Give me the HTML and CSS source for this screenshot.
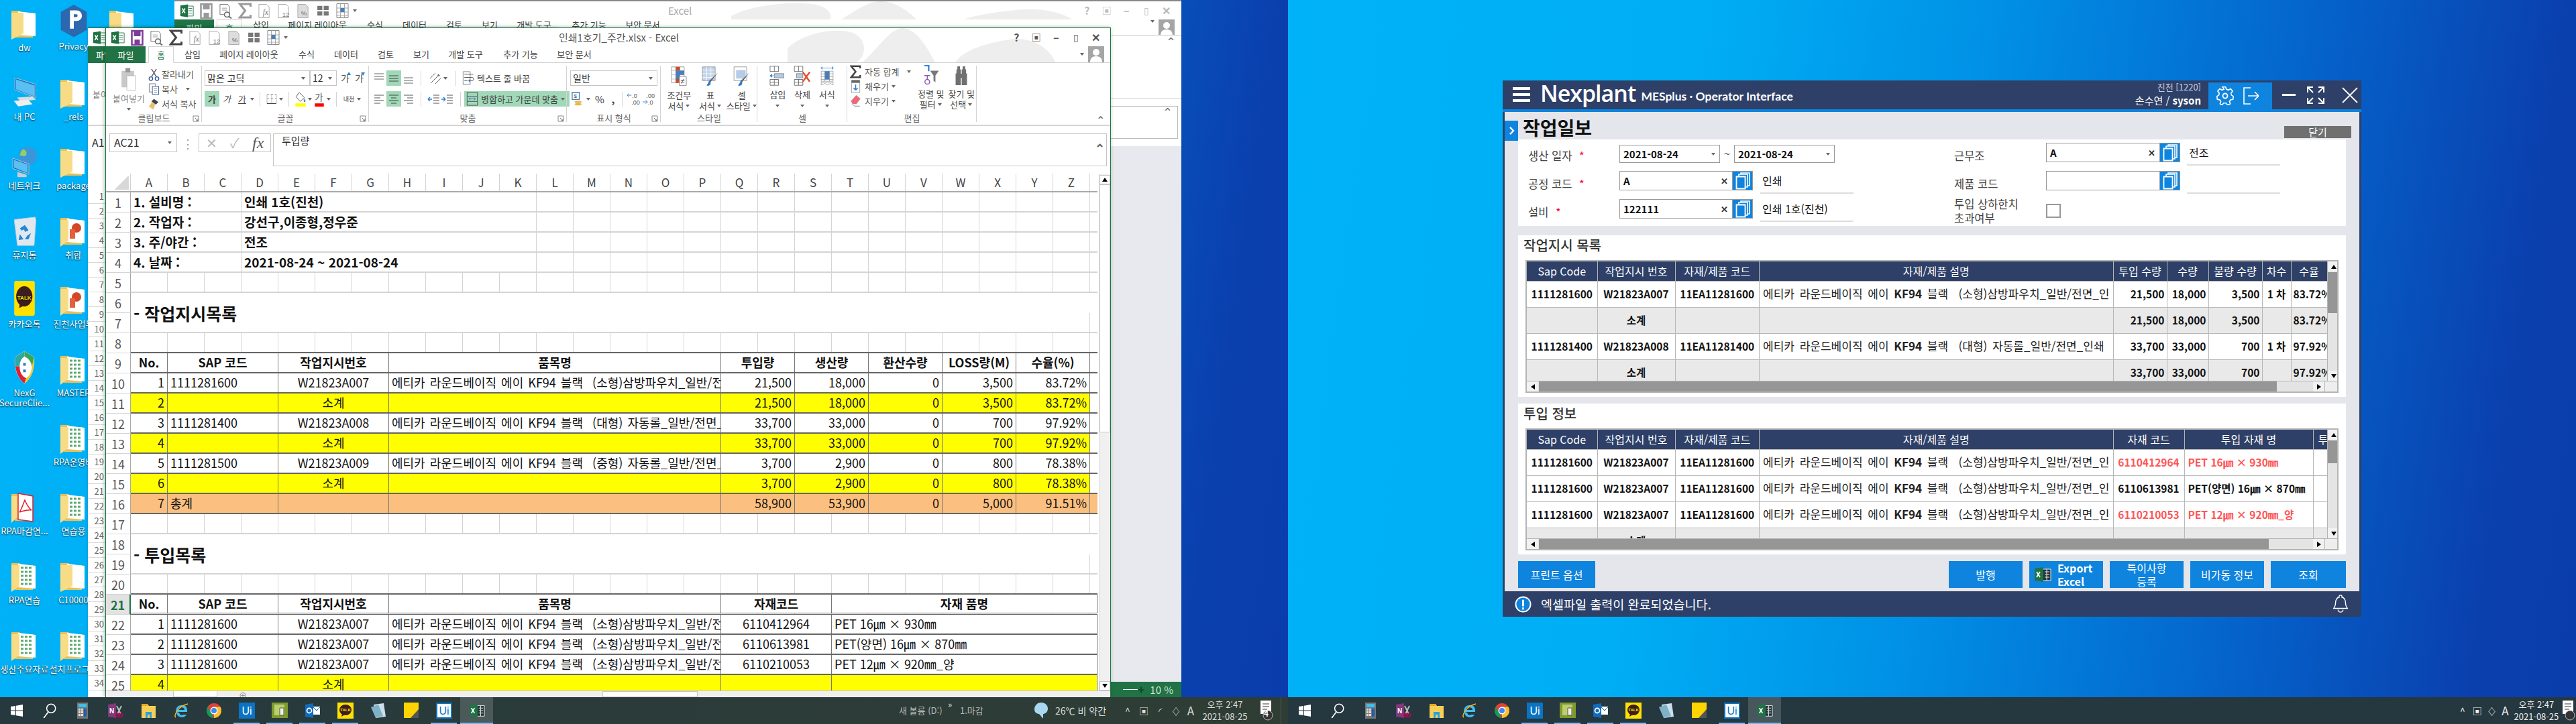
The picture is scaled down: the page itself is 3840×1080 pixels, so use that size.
FILE: index.html
```html
<!DOCTYPE html>
<html lang="ko">
<head>
<meta charset="utf-8">
<title>Desktop</title>
<link rel="stylesheet" href="styles.css">
</head>
<body>
<svg class="defs" aria-hidden="true">
<defs>
<symbol id="folder" viewBox="0 0 40 46"><path d="M0 3h12l3 3h17v37H6L0 38z" fill="#e9c15a"/><path d="M10 4l26 3v34l-26-2z" fill="#fff"/><path d="M0 6h18v31L0 46z" fill="#f8dc85" transform="translate(0 0)"/></symbol>
<symbol id="folderx" viewBox="0 0 40 46"><path d="M0 3h12l3 3h17v37H6L0 38z" fill="#e9c15a"/><path d="M10 4l26 3v34l-26-2z" fill="#fff"/><path d="M14 10h18M14 16h18M14 22h18M14 28h18M14 34h18" stroke="#5aa86f" stroke-width="3" stroke-dasharray="4 2"/><path d="M0 6h12v31L0 46z" fill="#f8dc85"/></symbol>
<symbol id="folderp" viewBox="0 0 40 46"><path d="M0 3h12l3 3h17v37H6L0 38z" fill="#e9c15a"/><path d="M10 4l26 3v34l-26-2z" fill="#fff"/><circle cx="24" cy="18" r="7" fill="#d24726"/><path d="M14 20h8v14h-8z" fill="#e2603a"/><path d="M0 6h12v31L0 46z" fill="#f8dc85"/></symbol>
<symbol id="xl" viewBox="0 0 24 24"><path d="M12 4h11v17H12z" fill="#fff" stroke="#207245"/><path d="M15 8h6M15 12h6M15 16h6" stroke="#207245"/><path d="M1 3l13-2v22L1 21z" fill="#207245"/><path d="M4 8l5 8M9 8l-5 8" stroke="#fff" stroke-width="1.8"/></symbol>
<symbol id="save" viewBox="0 0 20 24"><path d="M2 2h16v21H2z" fill="#fff" stroke="currentColor" stroke-width="2.5"/><path d="M5 2h10v8H5z" fill="currentColor"/><path d="M6 15h8v7H6z" fill="currentColor"/></symbol>
<symbol id="preview" viewBox="0 0 22 24"><path d="M2 2h12l3 4v12H2z" fill="#fff" stroke="#777"/><path d="M5 8h8M5 11h8" stroke="#999"/><circle cx="13" cy="18" r="4" fill="#fff" stroke="#666" stroke-width="1.6"/><path d="M16 21l4 3" stroke="#666" stroke-width="2"/></symbol>
<symbol id="sigma" viewBox="0 0 20 24"><path d="M18 6V2H2l8 10-8 10h16v-4" fill="none" stroke="currentColor" stroke-width="3"/></symbol>
<symbol id="fxd" viewBox="0 0 22 24"><path d="M2 2h12l4 4v17H2z" fill="#fff" stroke="#aaa"/><text x="8" y="18" font-size="12" font-style="italic" font-family="Liberation Serif" fill="#777">fx</text></symbol>
<symbol id="n12" viewBox="0 0 22 24"><path d="M2 2h12l4 4v17H2z" fill="#fff" stroke="#aaa"/><text x="8" y="21" font-size="10" font-family="Liberation Sans" fill="#777">12</text></symbol>
<symbol id="pct" viewBox="0 0 22 24"><path d="M2 2h12l4 4v17H2z" fill="#ddd" stroke="#aaa"/><text x="7" y="19" font-size="10" font-family="Liberation Sans" fill="#666">%</text></symbol>
<symbol id="quad" viewBox="0 0 20 20"><path d="M2 3h7v6H2zM11 3h7v6h-7zM2 11h7v6H2zM11 11h7v6h-7z" fill="#777"/></symbol>
<symbol id="gridb" viewBox="0 0 20 24"><path d="M1.500 1.500h17v21h-17z" fill="#fff" stroke="#888"/><path d="M1 8h18M1 14h18M1 19h18M7 2v20M13 2v20" stroke="#aaa"/><path d="M7 8h6v6H7z" fill="#4a7ebb"/></symbol>
<symbol id="caret" viewBox="0 0 8 6"><path d="M1 1h6L4 5z" fill="#666"/></symbol>
<symbol id="launch" viewBox="0 0 10 10"><path d="M1 1h8v8H1z" fill="none" stroke="#888"/><path d="M4 4l4 4M8 5v3H5" stroke="#777" fill="none"/></symbol>
<symbol id="paste" viewBox="0 0 34 50"><path d="M2 8h26v34H2z" fill="#c9c9c9"/><path d="M10 2h10v9H10z" fill="#999"/><path d="M13 18h18v30H13z" fill="#fff" stroke="#aaa"/></symbol>
<symbol id="cut" viewBox="0 0 18 22"><path d="M5 2l8 13M13 2L5 15" stroke="#555" stroke-width="1.400" fill="none"/><circle cx="4" cy="18" r="3" fill="none" stroke="#2b579a" stroke-width="1.400"/><circle cx="14" cy="18" r="3" fill="none" stroke="#2b579a" stroke-width="1.400"/></symbol>
<symbol id="copy" viewBox="0 0 18 20"><path d="M1.500 1.500h10v13h-10z" fill="#fff" stroke="#777"/><path d="M6.500 5.500h10v13h-10z" fill="#fff" stroke="#2b579a"/><path d="M9 9h5M9 12h5M9 15h5" stroke="#888"/></symbol>
<symbol id="brush" viewBox="0 0 18 20"><path d="M9 2l7 5-4 4-7-5z" fill="#444"/><path d="M6 7l5 4-3 8-7-5z" fill="#e7c26a"/></symbol>
<symbol id="lines-t" viewBox="0 0 20 20"><path d="M3 3h14M3 7h14M3 11h14" stroke="#666"/></symbol>
<symbol id="lines-m" viewBox="0 0 20 20"><path d="M3 6h14M3 10h14M3 14h14" stroke="#444"/></symbol>
<symbol id="lines-b" viewBox="0 0 20 20"><path d="M3 9h14M3 13h14M3 17h14" stroke="#666"/></symbol>
<symbol id="al" viewBox="0 0 20 20"><path d="M3 4h14M3 8h9M3 12h14M3 16h9" stroke="#555"/></symbol>
<symbol id="ac" viewBox="0 0 20 20"><path d="M3 4h14M6 8h8M3 12h14M6 16h8" stroke="#444"/></symbol>
<symbol id="ar" viewBox="0 0 20 20"><path d="M3 4h14M8 8h9M3 12h14M8 16h9" stroke="#555"/></symbol>
<symbol id="orient" viewBox="0 0 20 20"><path d="M3 17L15 5M2 10l8-8M10 18l8-8" stroke="#666" fill="none"/><path d="M14 3l3 3-4 1z" fill="#666"/></symbol>
<symbol id="wrap" viewBox="0 0 20 24"><path d="M2 2h11v20H2z" fill="#fff" stroke="#888"/><path d="M4 6h14M4 11h12a2 2 0 010 5h-4M4 16h5" stroke="#555" fill="none"/><path d="M13 13v6l-3-3z" fill="#2b7cd3"/></symbol>
<symbol id="merge" viewBox="0 0 20 24"><path d="M2 2h16v20H2zM2 8h16M2 16h16" fill="none" stroke="#555"/><path d="M5 12h10M5 12l2-2M5 12l2 2M15 12l-2-2M15 12l-2 2" stroke="#2b7cd3" fill="none"/></symbol>
<symbol id="indl" viewBox="0 0 20 20"><path d="M9 4h9M9 8h9M9 12h9M9 16h9" stroke="#555"/><path d="M7 10H1M1 10l3-3M1 10l3 3" stroke="#2b7cd3" fill="none" stroke-width="1.400"/></symbol>
<symbol id="indr" viewBox="0 0 20 20"><path d="M9 4h9M9 8h9M9 12h9M9 16h9" stroke="#555"/><path d="M1 10h6M7 10L4 7M7 10l-3 3" stroke="#2b7cd3" fill="none" stroke-width="1.400"/></symbol>
<symbol id="acct" viewBox="0 0 20 26"><path d="M2 2h12v12H2z" fill="#fff" stroke="#4a7ebb" stroke-width="1.500"/><text x="5" y="11" font-size="9" font-family="Liberation Sans" fill="#444">$</text><ellipse cx="12" cy="18" rx="6" ry="2" fill="#e7b84c"/><ellipse cx="12" cy="22" rx="6" ry="2" fill="#e7b84c"/></symbol>
<symbol id="dec1" viewBox="0 0 22 24"><text x="9" y="10" font-size="10" font-family="Liberation Sans" fill="#555">.0</text><text x="8" y="21" font-size="10" font-family="Liberation Sans" fill="#555">.00</text><path d="M8 6H1M1 6l3-3M1 6l3 3" stroke="#2b7cd3" fill="none"/></symbol>
<symbol id="dec2" viewBox="0 0 22 24"><text x="7" y="10" font-size="10" font-family="Liberation Sans" fill="#555">.00</text><text x="10" y="21" font-size="10" font-family="Liberation Sans" fill="#555">.0</text><path d="M1 17h8M9 17l-3-3M9 17l-3 3" stroke="#2b7cd3" fill="none"/></symbol>
<symbol id="border" viewBox="0 0 20 20"><path d="M3 3h14v14H3z" fill="none" stroke="#777" stroke-dasharray="1 1"/><path d="M3 10h14M10 3v14" stroke="#777" stroke-dasharray="1 1"/><path d="M3 17h14" stroke="#444"/></symbol>
<symbol id="fill" viewBox="0 0 20 24"><path d="M8 2l8 8-6 6-7-7z" fill="#fff" stroke="#555"/><path d="M15 11c2 3 3 4 3 5a2 2 0 01-3 0z" fill="#4a7ebb"/><path d="M2 19h16v5H2z" fill="#ffff00"/></symbol>
<symbol id="fcolor" viewBox="0 0 20 24"><text x="3" y="15" font-size="14" font-family="Noto Sans CJK KR" fill="#555">가</text><path d="M3 19h14v5H3z" fill="#ff0000"/></symbol>
<symbol id="cf" viewBox="0 0 30 38"><path d="M1 1h24v30H1z" fill="#fff" stroke="#888"/><path d="M1 8h24M1 16h24M1 24h24M9 1v30M17 1v30" stroke="#bbb"/><path d="M9 1h8v7H9zM9 24h8v7H9z" fill="#d24726"/><path d="M9 8h16v8H9zM9 16h8v8H9z" fill="#4a7ebb"/><path d="M16 19h13v17H16z" fill="#fff" stroke="#777"/><text x="18" y="33" font-size="14" font-family="Liberation Sans" fill="#444">≠</text></symbol>
<symbol id="tf" viewBox="0 0 32 38"><path d="M1 1h24v26H1z" fill="#c3d4ea" stroke="#888"/><path d="M1 7h24M1 14h24M1 21h24M9 1v26M17 1v26" stroke="#fff"/><path d="M30 12L16 30l-3-2z" fill="#666"/><path d="M13 28c4 0 4 3 3 6s-6 3-7 2 3-2 4-8z" fill="#2b7cd3"/></symbol>
<symbol id="cs" viewBox="0 0 32 38"><path d="M1 1h24v26H1z" fill="#fff" stroke="#888"/><path d="M5 7h18v16H5z" fill="#b5cbe6"/><path d="M30 12L16 30l-3-2z" fill="#666"/><path d="M13 28c4 0 4 3 3 6s-6 3-7 2 3-2 4-8z" fill="#2b7cd3"/></symbol>
<symbol id="cins" viewBox="0 0 30 38"><path d="M1 1h16v10H1zM9 1v10M1 26h16v11H1zM9 26v11M1 31h16" fill="#fff" stroke="#555"/><path d="M9 15h18v8H9z" fill="#b5cbe6" stroke="#777"/><path d="M8 19H1M1 19l3-3v6z" stroke="#2b7cd3" fill="#2b7cd3"/></symbol>
<symbol id="cdel" viewBox="0 0 32 38"><path d="M1 1h16v10H1zM9 1v10M1 26h16v11H1zM9 26v11M1 31h16" fill="#fff" stroke="#555"/><path d="M5 15h12v8H5z" fill="#b5cbe6" stroke="#777"/><path d="M17 12l13 18M30 12L17 30" stroke="#e0502d" stroke-width="3"/></symbol>
<symbol id="cfmt" viewBox="0 0 30 44"><path d="M1 5h28M1 5l3-3v6zM29 5l-3-3v6z" stroke="#2b7cd3" fill="none"/><path d="M2 12h26v22H2zM2 18h26M2 24h26M2 30h26M10 12v22M20 12v22" fill="#fff" stroke="#888"/><path d="M10 12h10v18H10z" fill="#4a7ebb"/><path d="M2 36h26v6l-6-3-6 3-6-3-8 3z" fill="none" stroke="#888"/></symbol>
<symbol id="fillb" viewBox="0 0 18 26"><path d="M1 1h16v24H1z" fill="#fff" stroke="#888"/><path d="M1 1h16v5H1z" fill="#666"/><path d="M9 9v11M9 20l-4-4M9 20l4-4" stroke="#2b7cd3" stroke-width="2" fill="none"/></symbol>
<symbol id="erase" viewBox="0 0 18 22"><path d="M10 1l7 6-7 9-6-1-3-4z" fill="#e86a7d"/><path d="M3 15l4 4h9" stroke="#777" fill="none"/></symbol>
<symbol id="sortf" viewBox="0 0 32 42"><path d="M2 1h9v12" stroke="#2b7cd3" stroke-width="3" fill="none"/><path d="M2 22h12M8 22v8" stroke="#8b5ab5" stroke-width="2" fill="none"/><circle cx="8" cy="35" r="5" fill="none" stroke="#8b5ab5" stroke-width="2"/><path d="M14 12h18l-7 10v14l-4-3V22z" fill="#777"/></symbol>
<symbol id="bino" viewBox="0 0 28 46"><path d="M5 3h6v7H5zM17 3h6v7h-6zM3 10h10v9H3zM15 10h10v9H15zM1 19h12v27H1zM15 19h12v27H15zM13 20h2v9h-2z" fill="#707070"/></symbol>
<symbol id="user" viewBox="0 0 24 24"><path d="M0 0h24v24H0z" fill="#a5a5a5"/><circle cx="12" cy="9" r="5" fill="#fff"/><path d="M3 24c0-7 4-9 9-9s9 2 9 9z" fill="#fff"/></symbol>
<symbol id="blobs" viewBox="0 0 430 52" preserveAspectRatio="none"><path d="M0 30C20 10 60 0 90 5s30 40 10 47H0zM110 52c20-15 40-50 60-52s40 30 50 52zM250 52c10-20 50-30 80-35 30-5 60 10 70 35z" fill="#eee"/></symbol>
<symbol id="pages" viewBox="0 0 22 26"><path d="M8 1h13v19H8z" fill="none" stroke="#fff" stroke-width="1.600"/><path d="M5 3h13v19H5z" fill="#0f84de" stroke="#fff" stroke-width="1.600"/><path d="M1.500 6.500h13v18h-13z" fill="#0f84de" stroke="#fff" stroke-width="1.800"/></symbol>
<symbol id="pc" viewBox="0 0 44 56"><path d="M4 0l38 12v24L4 22z" fill="#1d6fb5" stroke="#ccd"/><path d="M6 3l34 11v20L6 21z" fill="#58c0f2"/><path d="M8 36l28-2 6 6-28 3z" fill="#ddd"/><path d="M2 42l26-2 8 8-26 4z" fill="#eee"/></symbol>
<symbol id="net" viewBox="0 0 46 54"><circle cx="28" cy="16" r="16" fill="#3d95d9"/><path d="M20 4c6 2 8 8 4 12-4 2-6-2-10-1 2-6 3-9 6-11z" fill="#8fd06a"/><path d="M2 20l28 10v18L2 38z" fill="#1d6fb5" stroke="#ccd"/><path d="M4 23l24 8v15L4 36z" fill="#58c0f2"/><path d="M10 44l16 5v4H10z" fill="#ccc"/></symbol>
<symbol id="bin" viewBox="0 0 40 50"><path d="M3 6l34-4 1 6-3 40H8L3 8z" fill="#dfe8ee" stroke="#bcd"/><path d="M12 20l8-5 6 8-5 3-3-4-3 2zM12 30l6 8-8 1zM30 28l-4 10h-6l4-6z" fill="#2386d6"/></symbol>
<symbol id="talk" viewBox="0 0 53 90"><rect width="53" height="90" rx="5" fill="#ffe100"/><ellipse cx="26" cy="40" rx="21" ry="26" fill="#3c1e1e"/><path d="M14 60l-1 10 12-6z" fill="#3c1e1e"/><text x="26" y="48" text-anchor="middle" font-size="14" font-weight="700" font-family="Liberation Sans" fill="#fee500">TALK</text></symbol>
<symbol id="nexg" viewBox="0 0 50 80"><path d="M25 3l22 14c1 25-4 45-22 60C7 62 2 42 3 17z" fill="#fff" stroke="#ccc"/><path d="M25 3L3 17c0 8 0 14 1 20l10 2c-1-10 4-20 11-24z" fill="#2fa8a0"/><path d="M4 37c2 15 8 30 21 40l4-12C18 60 14 50 14 39z" fill="#e02030"/><path d="M47 17c1 25-4 45-22 60l4-12c10-6 12-16 13-26z" fill="#f7c712"/><path d="M25 3l22 14-5 22c0-10-8-20-17-24z" fill="#3aa655"/><path d="M22 30h6v6h-6zM22 45h6v6h-6z" fill="#2b79c2"/></symbol>
<symbol id="pdf" viewBox="0 0 40 46"><path d="M0 3h12l3 3h17v37H6L0 38z" fill="#e9c15a"/><path d="M10 2l22 4v38l-22-3z" fill="#fff" stroke="#e02030" stroke-width="1.500"/><path d="M20 12c-4 10-6 16-8 18 6-2 14-4 18-3-6-5-8-10-10-15z" fill="none" stroke="#e02030" stroke-width="1.500"/><path d="M0 6h9v31L0 46z" fill="#f8dc85"/></symbol>
<symbol id="privacy" viewBox="0 0 60 70"><path d="M30 0l27 15v38L30 68 3 53V15z" fill="#2c68ad"/><path d="M22 12h14a10 10 0 010 22h-6v16h-8zM30 20v6h5a3 3 0 000-6z" fill="#fff"/></symbol>
<symbol id="short" viewBox="0 0 14 14"><path d="M0 0h14v14H0z" fill="#fff"/><path d="M3 11c0-4 2-5 5-5V3l4 4-4 4V8c-2 0-3 1-5 3z" fill="#1f6fd0"/></symbol>
<symbol id="t-win" viewBox="0 0 20 20"><path d="M1 4l7-1v6.500H1zM9 2.800L19 1v8.500H9zM1 10.500h7V17l-7-1zM9 10.500h10V19L9 17.200z" fill="#fff"/></symbol>
<symbol id="t-search" viewBox="0 0 20 22"><circle cx="12" cy="8" r="6" fill="none" stroke="#fff" stroke-width="1.400"/><path d="M8 13l-6 8" stroke="#fff" stroke-width="1.600"/></symbol>
<symbol id="t-calc" viewBox="0 0 18 24"><rect x="1" y="0" width="16" height="24" fill="#777"/><path d="M3 2h12v5H3z" fill="#38c0ee"/><path d="M3 9h3v3H3zM7 9h3v3H7zM3 13h3v3H3zM7 13h3v3H7zM3 17h3v3H3zM7 17h3v3H7z" fill="#ddd"/><path d="M11 9h4v12h-4z" fill="#1f5fa8"/></symbol>
<symbol id="t-one" viewBox="0 0 24 24"><path d="M1 3l12-2v22L1 21z" fill="#80397b"/><text x="3" y="16" font-size="10" font-weight="700" font-family="Liberation Sans" fill="#fff">N</text><path d="M14 5l6 12M21 5l-6 12" stroke="#bbb" stroke-width="2"/><circle cx="15" cy="19" r="2.500" fill="none" stroke="#c05" stroke-width="1.500"/><circle cx="20" cy="19" r="2.500" fill="none" stroke="#c05" stroke-width="1.500"/></symbol>
<symbol id="t-exp" viewBox="0 0 24 24"><path d="M2 2h9l2 3h10v18H2z" fill="#f7cf56"/><path d="M2 2h9v3H2z" fill="#e3a822"/><path d="M8 14h9v9h-3v-5h-3v5H8z" fill="#2aa0dc"/></symbol>
<symbol id="t-ie" viewBox="0 0 24 24"><path d="M4 14h17c1-8-4-11-9-10-5 0-8 4-8 10zm3-3c0-3 3-4 5-4s5 1 5 4z" fill="#3fbdf1"/><path d="M5 14c0 6 5 8 8 8 4 0 6-2 7-4h-5c-2 2-5 1-6-3z" fill="#3fbdf1"/><path d="M4 22C0 20 8 5 22 2" fill="none" stroke="#f2b21e" stroke-width="1.500"/></symbol>
<symbol id="t-chrome" viewBox="0 0 24 24"><circle cx="12" cy="12" r="11" fill="#db4437"/><path d="M12 23a11 11 0 01-9.500-16.500L8 16z" fill="#0f9d58"/><path d="M12 23a11 11 0 009.500-16.500H12z" fill="#fbc02d"/><circle cx="12" cy="12" r="5.500" fill="#fff"/><circle cx="12" cy="12" r="4" fill="#4285f4"/></symbol>
<symbol id="t-ui" viewBox="0 0 24 24"><rect width="24" height="24" fill="#0a73c4"/><text x="12" y="18" text-anchor="middle" font-size="16" font-family="Liberation Sans" fill="#fff">Ui</text></symbol>
<symbol id="t-ui2" viewBox="0 0 24 24"><rect width="24" height="24" fill="#fff"/><rect x="1" y="1" width="22" height="22" fill="none" stroke="#0a73c4" stroke-width="2"/><text x="12" y="18" text-anchor="middle" font-size="16" font-family="Liberation Sans" fill="#0a73c4">Ui</text></symbol>
<symbol id="t-green" viewBox="0 0 24 24"><rect width="24" height="23" fill="#7f9a2c"/><path d="M4 3h15v16H4z" fill="#b9cf6f"/><path d="M12 8h6v11h-6z" fill="#eef3d8" stroke="#556"/></symbol>
<symbol id="t-out" viewBox="0 0 24 24"><path d="M1 3l12-2v22L1 21z" fill="#0f6cbd"/><circle cx="7" cy="12" r="3.500" fill="none" stroke="#fff" stroke-width="1.800"/><path d="M13 6h10v12H13z" fill="#fff"/><path d="M13 7l5 5 5-5" fill="none" stroke="#0f6cbd"/></symbol>
<symbol id="t-talk" viewBox="0 0 24 24"><rect width="24" height="24" fill="#ffe100"/><ellipse cx="12" cy="11" rx="9" ry="8" fill="#3c1e1e"/><path d="M7 17l-1 4 5-3z" fill="#3c1e1e"/><text x="12" y="13" text-anchor="middle" font-size="6" font-weight="700" font-family="Liberation Sans" fill="#fee500">TALK</text></symbol>
<symbol id="t-note" viewBox="0 0 24 24"><path d="M5 3l15-2 3 20-14 2z" fill="#cbe0ea"/><path d="M1 7l11-4 7 17-11 3z" fill="#7fb2c7"/></symbol>
<symbol id="t-sticky" viewBox="0 0 24 24"><path d="M1 0h22v23H1z" fill="#ffd400"/><path d="M23 10v13H11z" fill="#555"/></symbol>
<symbol id="t-xl" viewBox="0 0 26 24"><path d="M12 4h13v17H12z" fill="#28323a" stroke="#e8f0ea"/><path d="M16 8h7M16 12h7M16 16h7M19 4v17" stroke="#e8f0ea"/><path d="M1 3l13-2v22L1 21z" fill="#217346"/><path d="M4 8l5 8M9 8l-5 8" stroke="#fff" stroke-width="1.800"/></symbol>
<symbol id="t-note2" viewBox="0 0 20 30"><path d="M1 0h16v20H1z" fill="#fff"/><path d="M4 5h10M4 9h10M4 13h7" stroke="#333"/><circle cx="12" cy="22" r="7" fill="#333" stroke="#bbb"/></symbol>
<symbol id="gear" viewBox="0 0 24 24"><path d="M10 1h4l1 3 2.500 1 3-1.500 2.500 3-2 2.500.500 2.500L24 13l-.500 4-3 .500-1.500 2.200 1 3-3.500 1.500-2-2.500h-3l-2 2.500L7 22.700l1-3-1.500-2.200-3-.500L3 13l2.500-1.500L6 9 4 6.500l2.500-3 3 1.500L12 4z" fill="none" stroke="#fff" stroke-width="1.400" transform="translate(-1.500 -.5)"/><circle cx="12" cy="12" r="3" fill="none" stroke="#fff" stroke-width="1.600"/></symbol>
<symbol id="logout" viewBox="0 0 24 30"><path d="M12 3H2v24h10" fill="none" stroke="#fff" stroke-width="1.600"/><path d="M8 15h15M18 9l6 6-6 6" fill="none" stroke="#fff" stroke-width="1.600"/></symbol>
<symbol id="expand" viewBox="0 0 28 28"><path d="M2 10V2h8M2 2l8 8M18 2h8v8M26 2l-8 8M2 18v8h8M2 26l8-8M18 26h8v-8M26 26l-8-8" fill="none" stroke="#fff" stroke-width="2"/></symbol>
<symbol id="x" viewBox="0 0 24 24"><path d="M1 1l22 22M23 1L1 23" stroke="currentColor" stroke-width="1.800"/></symbol>
<symbol id="bell" viewBox="0 0 24 30"><path d="M12 1a2 2 0 012 3c5 1 6 5 6 10 0 5 2 6 3 8H1c1-2 3-3 3-8 0-5 1-9 6-10a2 2 0 012-3zM8 24a4 4 0 008 0" fill="none" stroke="#fff" stroke-width="1.500"/></symbol>
<symbol id="info" viewBox="0 0 26 26"><circle cx="13" cy="13" r="11.500" fill="#0f84de" stroke="#fff" stroke-width="2"/><path d="M11.500 6h3v10h-3zM11.500 18h3v3h-3z" fill="#fff"/></symbol>
<symbol id="chev" viewBox="0 0 10 14"><path d="M2 1l6 6-6 6" fill="none" stroke="#fff" stroke-width="2.600"/></symbol>
<symbol id="cloud" viewBox="0 0 22 26"><path d="M11 1c6 0 10 4 10 9 0 6-5 8-7 8v7l-6-7c-3 0-7-2-7-7s4-10 10-10z" fill="#a8d8f2"/></symbol>
<symbol id="tri-up" viewBox="0 0 10 10"><path d="M5 2l4 6H1z" fill="#000"/></symbol>
<symbol id="tri-dn" viewBox="0 0 10 10"><path d="M1 2h8L5 8z" fill="#000"/></symbol>
<symbol id="tri-l" viewBox="0 0 10 10"><path d="M8 1v8L2 5z" fill="#000"/></symbol>
<symbol id="tri-r" viewBox="0 0 10 10"><path d="M2 1v8l6-4z" fill="#000"/></symbol>
</defs>
</svg>

<main class="screen">
<section class="monitor">
  <div class="desk">
    <div class="icons">
      <div class="di"><svg class="g"><use href="#folder"/></svg><span>dw</span></div>
      <div class="di"><svg class="g"><use href="#pc"/></svg><span>내 PC</span></div>
      <div class="di"><svg class="g"><use href="#net"/></svg><span>네트워크</span></div>
      <div class="di"><svg class="g"><use href="#bin"/></svg><span>휴지통</span></div>
      <div class="di"><svg class="g g-talk"><use href="#talk"/></svg><span>카카오톡</span></div>
      <div class="di"><svg class="g g-talk"><use href="#nexg"/></svg><span>NexG<br>SecureClie...</span></div>
      <div class="di"></div>
      <div class="di"><svg class="g"><use href="#pdf"/></svg><span>RPA마감연...</span></div>
      <div class="di"><svg class="g"><use href="#folderx"/></svg><span>RPA연습</span></div>
      <div class="di"><svg class="g"><use href="#folderx"/></svg><span>생산주요자료</span></div>
      <div class="di"><svg class="g g-priv"><use href="#privacy"/></svg><span>Privacy</span></div>
      <div class="di"><svg class="g"><use href="#folder"/></svg><span>_rels</span></div>
      <div class="di"><svg class="g"><use href="#folder"/></svg><span>package</span></div>
      <div class="di"><svg class="g"><use href="#folderp"/></svg><span>취합</span></div>
      <div class="di"><svg class="g"><use href="#folderp"/></svg><span>진천사업부</span></div>
      <div class="di"><svg class="g"><use href="#folderx"/></svg><span>MASTER</span></div>
      <div class="di"><svg class="g"><use href="#folderx"/></svg><span>RPA운영비</span></div>
      <div class="di"><svg class="g"><use href="#folderx"/></svg><span>연습용</span></div>
      <div class="di"><svg class="g"><use href="#folder"/></svg><span>C10000</span></div>
      <div class="di"><svg class="g"><use href="#folderx"/></svg><span>설치프로그램</span></div>
      <div class="di"><svg class="g"><use href="#folder"/></svg></div>
      <div class="di rowfill"></div>
      <div class="di"><svg class="g"><use href="#folder"/></svg></div>
    </div>

    <div class="win win-back">
      <div class="tbar">
        <div class="qat qat-back">
          <svg class="q" viewBox="0 0 24 24"><use href="#xl"/></svg>
          <svg class="q gray"><use href="#save"/></svg>
          <svg class="q"><use href="#preview"/></svg>
          <svg class="q gray"><use href="#sigma"/></svg>
          <svg class="q"><use href="#fxd"/></svg>
          <svg class="q"><use href="#n12"/></svg>
          <svg class="q"><use href="#pct"/></svg>
          <svg class="q"><use href="#quad"/></svg>
          <svg class="q"><use href="#gridb"/></svg>
          <svg class="qc"><use href="#caret"/></svg>
        </div>
        <span class="wtitle back-t">Excel</span>
        <svg class="blobs blobs-b" preserveAspectRatio="none"><use href="#blobs"/></svg>
        <div class="wctl faint"><span>?</span><span class="c-box">▣</span><span>–</span><span class="c-box">▯</span><span>✕</span></div>
      </div>
      <div class="tabs tabs-back">
        <span class="tab-file">파일</span><span class="tab-home">홈</span>
        <span class="tb w1">삽입</span><span class="tb w2">페이지 레이아웃</span><span class="tb w3">수식</span><span class="tb w4">데이터</span><span class="tb w3">검토</span><span class="tb w5">보기</span><span class="tb w6">개발 도구</span><span class="tb w7">추가 기능</span><span class="tb w8">보안 문서</span>
        <svg class="qc push"><use href="#caret"/></svg><svg class="ava"><use href="#user"/></svg>
      </div>
      <div class="back-rib"><span class="upc">⌃</span></div>
      <div class="back-fx"><span class="upc">⌃</span></div>
      <div class="back-status"><i class="zoomline"></i><b>+</b><span>10 %</span></div>
    </div>

    <div class="win win-mid">
      <div class="mid-top"><svg class="q" viewBox="0 0 24 24"><use href="#xl"/></svg></div>
      <div class="mid-file">파일</div>
      <div class="mid-rib"><span>붙여넣기</span></div>
      <div class="mid-fx">A1</div>
      <div class="mid-corner"></div>
      <ol class="mid-rows"><li>1</li><li>2</li><li>3</li><li>4</li><li>5</li><li>6</li><li>7</li><li>8</li><li>9</li><li>10</li><li>11</li><li>12</li><li>13</li><li>14</li><li>15</li><li>16</li><li>17</li><li>18</li><li>19</li><li>20</li><li>21</li><li>22</li><li>23</li><li>24</li><li>25</li><li>26</li><li>27</li><li>28</li><li>29</li><li>30</li><li>31</li><li>32</li><li>33</li><li>34</li></ol>
    </div>

    <div class="win win-front">
      <div class="tbar">
        <div class="qat">
          <svg class="q" viewBox="0 0 24 24"><use href="#xl"/></svg>
          <svg class="q purple"><use href="#save"/></svg>
          <svg class="q"><use href="#preview"/></svg>
          <svg class="q dark"><use href="#sigma"/></svg>
          <svg class="q"><use href="#fxd"/></svg>
          <svg class="q"><use href="#n12"/></svg>
          <svg class="q"><use href="#pct"/></svg>
          <svg class="q"><use href="#quad"/></svg>
          <svg class="q"><use href="#gridb"/></svg>
          <svg class="qc"><use href="#caret"/></svg>
        </div>
        <span class="wtitle">인쇄1호기_주간.xlsx - Excel</span>
        <svg class="blobs blobs-f" preserveAspectRatio="none"><use href="#blobs"/></svg>
        <div class="wctl"><span>?</span><span class="c-box">▣</span><span>–</span><span class="c-box">▯</span><span>✕</span></div>
      </div>
      <div class="tabs">
        <span class="tab-file">파일</span><span class="tab-home">홈</span>
        <span class="tb w1">삽입</span><span class="tb w2">페이지 레이아웃</span><span class="tb w3">수식</span><span class="tb w4">데이터</span><span class="tb w3">검토</span><span class="tb w5">보기</span><span class="tb w6">개발 도구</span><span class="tb w7">추가 기능</span><span class="tb w8">보안 문서</span>
        <svg class="qc push"><use href="#caret"/></svg><svg class="ava"><use href="#user"/></svg>
      </div>

      <div class="ribbon">
        <div class="grp g-clip">
          <div class="grp-body clip">
            <div class="big-col b-paste"><svg class="i-paste"><use href="#paste"/></svg><span>붙여넣기</span><svg class="qc"><use href="#caret"/></svg></div>
            <div class="clip-list">
              <div><svg class="i16"><use href="#cut"/></svg>잘라내기</div>
              <div><svg class="i16"><use href="#copy"/></svg>복사<svg class="qc m-l"><use href="#caret"/></svg></div>
              <div><svg class="i16"><use href="#brush"/></svg>서식 복사</div>
            </div>
          </div>
          <div class="grp-label">클립보드<svg class="lau"><use href="#launch"/></svg></div>
        </div>
        <div class="grp g-font">
          <div class="grp-body rows">
            <div class="rr">
              <div class="combo c-font">맑은 고딕<svg class="qc push"><use href="#caret"/></svg></div>
              <div class="combo c-size">12<svg class="qc push"><use href="#caret"/></svg></div>
              <span class="ga gap-g">가<sup>▲</sup></span><span class="ga">가<sup>▼</sup></span>
            </div>
            <div class="rr">
              <span class="btn on bb">가</span><span class="btn ii">가</span><span class="btn uu">가</span><svg class="qc"><use href="#caret"/></svg><i class="sep"></i>
              <svg class="i20"><use href="#border"/></svg><svg class="qc"><use href="#caret"/></svg><i class="sep"></i>
              <svg class="i20"><use href="#fill"/></svg><svg class="qc"><use href="#caret"/></svg>
              <svg class="i20"><use href="#fcolor"/></svg><svg class="qc"><use href="#caret"/></svg><i class="sep"></i>
              <span class="tiny">내천</span><svg class="qc"><use href="#caret"/></svg>
            </div>
          </div>
          <div class="grp-label">글꼴<svg class="lau"><use href="#launch"/></svg></div>
        </div>
        <div class="grp g-align">
          <div class="grp-body rows">
            <div class="rr">
              <span class="btn"><svg class="i20"><use href="#lines-t"/></svg></span><span class="btn on"><svg class="i20"><use href="#lines-m"/></svg></span><span class="btn"><svg class="i20"><use href="#lines-b"/></svg></span><i class="sep"></i>
              <span class="btn w-or"><svg class="i20"><use href="#orient"/></svg><svg class="qc"><use href="#caret"/></svg></span><i class="sep"></i>
              <span class="txt-btn"><svg class="i20"><use href="#wrap"/></svg>텍스트 줄 바꿈</span>
            </div>
            <div class="rr">
              <span class="btn"><svg class="i20"><use href="#al"/></svg></span><span class="btn on"><svg class="i20"><use href="#ac"/></svg></span><span class="btn"><svg class="i20"><use href="#ar"/></svg></span><i class="sep"></i>
              <span class="btn w-ind"><svg class="i20"><use href="#indl"/></svg><svg class="i20"><use href="#indr"/></svg></span><i class="sep"></i>
              <span class="txt-btn merge"><svg class="i20"><use href="#merge"/></svg>병합하고 가운데 맞춤<svg class="qc"><use href="#caret"/></svg></span>
            </div>
          </div>
          <div class="grp-label">맞춤<svg class="lau"><use href="#launch"/></svg></div>
        </div>
        <div class="grp g-num">
          <div class="grp-body rows rows-n">
            <div class="rr"><div class="combo c-num">일반<svg class="qc push"><use href="#caret"/></svg></div></div>
            <div class="rr rr-n">
              <svg class="i20"><use href="#acct"/></svg><svg class="qc"><use href="#caret"/></svg><span class="pc">%</span><span class="pc comma">,</span><i class="sep"></i><svg class="i20"><use href="#dec1"/></svg><svg class="i20"><use href="#dec2"/></svg>
            </div>
          </div>
          <div class="grp-label">표시 형식<svg class="lau"><use href="#launch"/></svg></div>
        </div>
        <div class="grp g-style">
          <div class="grp-body bigs">
            <div class="big"><svg class="i-big"><use href="#cf"/></svg><span>조건부</span><span>서식<svg class="qc"><use href="#caret"/></svg></span></div>
            <div class="big"><svg class="i-big"><use href="#tf"/></svg><span>표</span><span>서식<svg class="qc"><use href="#caret"/></svg></span></div>
            <div class="big"><svg class="i-big"><use href="#cs"/></svg><span>셀</span><span>스타일<svg class="qc"><use href="#caret"/></svg></span></div>
          </div>
          <div class="grp-label">스타일</div>
        </div>
        <div class="grp g-cell">
          <div class="grp-body bigs">
            <div class="big"><svg class="i-big"><use href="#cins"/></svg><span>삽입</span><svg class="qc"><use href="#caret"/></svg></div>
            <div class="big"><svg class="i-big"><use href="#cdel"/></svg><span>삭제</span><svg class="qc"><use href="#caret"/></svg></div>
            <div class="big"><svg class="i-big"><use href="#cfmt"/></svg><span>서식</span><svg class="qc"><use href="#caret"/></svg></div>
          </div>
          <div class="grp-label">셀</div>
        </div>
        <div class="grp g-edit">
          <div class="grp-body edit">
            <div class="clip-list edit-list">
              <div><svg class="i16 dark"><use href="#sigma"/></svg>자동 합계<svg class="qc m-l"><use href="#caret"/></svg></div>
              <div><svg class="i16"><use href="#fillb"/></svg>채우기<svg class="qc"><use href="#caret"/></svg></div>
              <div><svg class="i16"><use href="#erase"/></svg>지우기<svg class="qc"><use href="#caret"/></svg></div>
            </div>
            <div class="big"><svg class="i-big"><use href="#sortf"/></svg><span>정렬 및</span><span>필터<svg class="qc"><use href="#caret"/></svg></span></div>
            <div class="big"><svg class="i-big"><use href="#bino"/></svg><span>찾기 및</span><span>선택<svg class="qc"><use href="#caret"/></svg></span></div>
          </div>
          <div class="grp-label">편집</div>
        </div>
        <span class="rib-up">⌃</span>
      </div>

      <div class="fxbar">
        <div class="namebox">AC21<svg class="qc push"><use href="#caret"/></svg></div>
        <span class="dots">⋮</span>
        <div class="fxbtns"><span class="fx-x">✕</span><span class="fx-c">✓</span><span class="fx-f">fx</span></div>
        <div class="fxinput">투입량<span class="fx-up">⌃</span></div>
      </div>

      <div class="sheet-wrap">
        <div class="sheet">
          <div class="colhead"><div class="corner"></div><div class="heads"><span>A</span><span>B</span><span>C</span><span>D</span><span>E</span><span>F</span><span>G</span><span>H</span><span>I</span><span>J</span><span>K</span><span>L</span><span>M</span><span>N</span><span>O</span><span>P</span><span>Q</span><span>R</span><span>S</span><span>T</span><span>U</span><span>V</span><span>W</span><span>X</span><span>Y</span><span>Z</span></div></div>

          <div class="xrow"><div class="rh">1</div><div class="cells"><div class="c s3 b info">1. 설비명 :</div><div class="c s8 b info">인쇄 1호(진천)</div></div></div>
          <div class="xrow"><div class="rh">2</div><div class="cells"><div class="c s3 b info">2. 작업자 :</div><div class="c s8 b info">강선구,이종형,정우준</div></div></div>
          <div class="xrow"><div class="rh">3</div><div class="cells"><div class="c s3 b info">3. 주/야간 :</div><div class="c s8 b info">전조</div></div></div>
          <div class="xrow"><div class="rh">4</div><div class="cells"><div class="c s3 b info">4. 날짜 :</div><div class="c s8 b info">2021-08-24 ~ 2021-08-24</div></div></div>
          <div class="xrow"><div class="rh">5</div><div class="cells"></div></div>
          <div class="xrow"><div class="rh">6</div><div class="cells nob"><div class="c s26 sect"><span>- 작업지시목록</span></div></div></div>
          <div class="xrow"><div class="rh">7</div><div class="cells"><div class="c s26"></div></div></div>
          <div class="xrow"><div class="rh">8</div><div class="cells hb"></div></div>

          <div class="xrow"><div class="rh">9</div><div class="cells t hb"><div class="c s1 m b">No.</div><div class="c s3 m b">SAP 코드</div><div class="c s3 m b">작업지시번호</div><div class="c s9 m b">품목명</div><div class="c s2 m b">투입량</div><div class="c s2 m b">생산량</div><div class="c s2 m b">환산수량</div><div class="c s2 m b">LOSS량(M)</div><div class="c s2 m b">수율(%)</div></div></div>
          <div class="xrow"><div class="rh">10</div><div class="cells t hb"><div class="c s1 r">1</div><div class="c s3">1111281600</div><div class="c s3 m">W21823A007</div><div class="c s9 pn">에티카 라운드베이직 에이 KF94 블랙&nbsp; (소형)삼방파우치_일반/전면_인쇄</div><div class="c s2 r">21,500</div><div class="c s2 r">18,000</div><div class="c s2 r">0</div><div class="c s2 r">3,500</div><div class="c s2 r">83.72%</div></div></div>
          <div class="xrow"><div class="rh">11</div><div class="cells t hb y"><div class="c s1 r">2</div><div class="c s3"></div><div class="c s3 m">소계</div><div class="c s9"></div><div class="c s2 r">21,500</div><div class="c s2 r">18,000</div><div class="c s2 r">0</div><div class="c s2 r">3,500</div><div class="c s2 r">83.72%</div></div></div>
          <div class="xrow"><div class="rh">12</div><div class="cells t hb"><div class="c s1 r">3</div><div class="c s3">1111281400</div><div class="c s3 m">W21823A008</div><div class="c s9 pn">에티카 라운드베이직 에이 KF94 블랙&nbsp; (대형) 자동롤_일반/전면_인쇄</div><div class="c s2 r">33,700</div><div class="c s2 r">33,000</div><div class="c s2 r">0</div><div class="c s2 r">700</div><div class="c s2 r">97.92%</div></div></div>
          <div class="xrow"><div class="rh">13</div><div class="cells t hb y"><div class="c s1 r">4</div><div class="c s3"></div><div class="c s3 m">소계</div><div class="c s9"></div><div class="c s2 r">33,700</div><div class="c s2 r">33,000</div><div class="c s2 r">0</div><div class="c s2 r">700</div><div class="c s2 r">97.92%</div></div></div>
          <div class="xrow"><div class="rh">14</div><div class="cells t hb"><div class="c s1 r">5</div><div class="c s3">1111281500</div><div class="c s3 m">W21823A009</div><div class="c s9 pn">에티카 라운드베이직 에이 KF94 블랙&nbsp; (중형) 자동롤_일반/전면_인쇄</div><div class="c s2 r">3,700</div><div class="c s2 r">2,900</div><div class="c s2 r">0</div><div class="c s2 r">800</div><div class="c s2 r">78.38%</div></div></div>
          <div class="xrow"><div class="rh">15</div><div class="cells t hb y"><div class="c s1 r">6</div><div class="c s3"></div><div class="c s3 m">소계</div><div class="c s9"></div><div class="c s2 r">3,700</div><div class="c s2 r">2,900</div><div class="c s2 r">0</div><div class="c s2 r">800</div><div class="c s2 r">78.38%</div></div></div>
          <div class="xrow"><div class="rh">16</div><div class="cells t hb o"><div class="c s1 r">7</div><div class="c s3">총계</div><div class="c s3"></div><div class="c s9"></div><div class="c s2 r">58,900</div><div class="c s2 r">53,900</div><div class="c s2 r">0</div><div class="c s2 r">5,000</div><div class="c s2 r">91.51%</div><div class="c sl"></div></div></div>
          <div class="xrow"><div class="rh">17</div><div class="cells"></div></div>
          <div class="xrow"><div class="rh">18</div><div class="cells nob"><div class="c s26 sect"><span>- 투입목록</span></div></div></div>
          <div class="xrow"><div class="rh">19</div><div class="cells"><div class="c s26"></div></div></div>
          <div class="xrow"><div class="rh">20</div><div class="cells hb"></div></div>

          <div class="xrow"><div class="rh act">21</div><div class="cells t dbl"><div class="c s1 m b">No.</div><div class="c s3 m b">SAP 코드</div><div class="c s3 m b">작업지시번호</div><div class="c s9 m b">품목명</div><div class="c s3 m b">자재코드</div><div class="c s8 m b">자재 품명</div></div></div>
          <div class="xrow"><div class="rh">22</div><div class="cells t hb"><div class="c s1 r">1</div><div class="c s3">1111281600</div><div class="c s3 m">W21823A007</div><div class="c s9 pn">에티카 라운드베이직 에이 KF94 블랙&nbsp; (소형)삼방파우치_일반/전면_인쇄</div><div class="c s3 m">6110412964</div><div class="c s8">PET 16㎛ × 930㎜</div></div></div>
          <div class="xrow"><div class="rh">23</div><div class="cells t hb"><div class="c s1 r">2</div><div class="c s3">1111281600</div><div class="c s3 m">W21823A007</div><div class="c s9 pn">에티카 라운드베이직 에이 KF94 블랙&nbsp; (소형)삼방파우치_일반/전면_인쇄</div><div class="c s3 m">6110613981</div><div class="c s8">PET(양면) 16㎛ × 870㎜</div></div></div>
          <div class="xrow"><div class="rh">24</div><div class="cells t hb"><div class="c s1 r">3</div><div class="c s3">1111281600</div><div class="c s3 m">W21823A007</div><div class="c s9 pn">에티카 라운드베이직 에이 KF94 블랙&nbsp; (소형)삼방파우치_일반/전면_인쇄</div><div class="c s3 m">6110210053</div><div class="c s8">PET 12㎛ × 920㎜_양</div></div></div>
          <div class="xrow"><div class="rh">25</div><div class="cells t hb y"><div class="c s1 r">4</div><div class="c s3"></div><div class="c s3 m">소계</div><div class="c s9"></div><div class="c s3"></div><div class="c s8"></div></div></div>
        </div>
        <div class="vs"><span class="vs-b"><svg class="tri"><use href="#tri-up"/></svg></span><span class="vs-t"></span><span class="vs-f"></span><span class="vs-b"><svg class="tri"><use href="#tri-dn"/></svg></span></div>
      </div>
      <div class="sheetbar"><span class="sh-tab">Sheet1</span><span class="sh-plus">⊕</span><span class="sh-thumb"></span></div>
    </div>
  </div>
  <footer class="taskbar tb-l">
    <span class="ti"><svg class="ti-i s20"><use href="#t-win"/></svg></span>
    <span class="ti"><svg class="ti-i"><use href="#t-search"/></svg></span>
    <span class="ti"><svg class="ti-i"><use href="#t-calc"/></svg></span>
    <span class="ti"><svg class="ti-i"><use href="#t-one"/></svg></span>
    <span class="ti"><svg class="ti-i"><use href="#t-exp"/></svg></span>
    <span class="ti"><svg class="ti-i"><use href="#t-ie"/></svg></span>
    <span class="ti"><svg class="ti-i"><use href="#t-chrome"/></svg></span>
    <span class="ti run"><svg class="ti-i"><use href="#t-ui"/></svg></span>
    <span class="ti run"><svg class="ti-i"><use href="#t-green"/></svg></span>
    <span class="ti run"><svg class="ti-i"><use href="#t-out"/></svg></span>
    <span class="ti run"><svg class="ti-i"><use href="#t-talk"/></svg></span>
    <span class="ti"><svg class="ti-i"><use href="#t-note"/></svg></span>
    <span class="ti"><svg class="ti-i"><use href="#t-sticky"/></svg></span>
    <span class="ti run"><svg class="ti-i"><use href="#t-ui2"/></svg></span>
    <span class="ti run act"><svg class="ti-i"><use href="#t-xl"/></svg></span>
    <div class="tray">
      <span class="tool1">새 볼륨 (D:)</span><span class="tchev">»</span><span class="tool2">1.마감</span>
      <svg class="w-ic"><use href="#cloud"/></svg><span class="w-tx">26℃ 비 약간</span>
      <span class="sys">^</span><span class="sys">▣</span><span class="sys">◜</span><span class="sys">♢</span><span class="sys-a">A</span>
      <div class="clock"><span>오후 2:47</span><span>2021-08-25</span></div>
      <span class="notif"><svg class="n-ic"><use href="#t-note2"/></svg><b>4</b></span>
      <i class="showd"></i>
    </div>
  </footer>
</section>

<section class="monitor">
  <div class="desk">
    <div class="mes">
      <header class="mes-h">
        <div class="burger"><i></i><i></i><i></i></div>
        <span class="logo">Nexplant</span>
        <span class="logo-sub">MESplus · Operator Interface</span>
        <div class="who"><span class="site">진천 [1220]</span><span class="usr">손수연 / <b>syson</b></span></div>
        <div class="h-blue"><svg class="h-gear"><use href="#gear"/></svg><svg class="h-out"><use href="#logout"/></svg></div>
        <div class="h-ctl"><i class="h-min"></i><svg class="h-exp"><use href="#expand"/></svg><svg class="h-x"><use href="#x"/></svg></div>
      </header>
      <div class="mes-b">
        <span class="side"><svg class="side-i"><use href="#chev"/></svg></span>
        <div class="page-t"><h1>작업일보</h1><span class="close">닫기</span></div>
        <div class="form">
          <div class="fcol">
            <div class="frow"><label class="fl">생산 일자 <em>*</em></label><div class="date">2021-08-24<svg class="qc2 push"><use href="#caret"/></svg></div><span class="tilde">~</span><div class="date">2021-08-24<svg class="qc2 push"><use href="#caret"/></svg></div></div>
            <div class="frow"><label class="fl">공정 코드 <em>*</em></label><div class="look"><span class="lv">A</span><span class="lx">✕</span><span class="lb"><svg class="lb-i"><use href="#pages"/></svg></span></div><div class="val">인쇄</div></div>
            <div class="frow"><label class="fl">설비 <em>*</em></label><div class="look"><span class="lv">122111</span><span class="lx">✕</span><span class="lb"><svg class="lb-i"><use href="#pages"/></svg></span></div><div class="val">인쇄 1호(진천)</div></div>
          </div>
          <div class="fcol fcol-r">
            <div class="frow"><label class="fl">근무조</label><div class="look"><span class="lv">A</span><span class="lx">✕</span><span class="lb"><svg class="lb-i"><use href="#pages"/></svg></span></div><div class="val">전조</div></div>
            <div class="frow"><label class="fl">제품 코드</label><div class="look"><span class="lv"></span><span class="lb"><svg class="lb-i"><use href="#pages"/></svg></span></div><div class="val"></div></div>
            <div class="frow"><label class="fl fl2">투입 상하한치<br>초과여부</label><span class="chk"></span></div>
          </div>
        </div>

        <section class="panel p1">
          <h2>작업지시 목록</h2>
          <div class="gridbox">
            <div class="gridtop">
              <div class="gv">
                <table class="tbl tbl1">
                  <colgroup><col class="k1"><col class="k2"><col class="k3"><col class="k4"><col class="k5"><col class="k6"><col class="k7"><col class="k8"><col class="k9"></colgroup>
                  <thead><tr><th>Sap Code</th><th>작업지시 번호</th><th>자재/제품 코드</th><th>자재/제품 설명</th><th>투입 수량</th><th>수량</th><th>불량 수량</th><th>차수</th><th>수율</th></tr></thead>
                  <tbody>
                    <tr><td class="n">1111281600</td><td class="n">W21823A007</td><td class="n">11EA11281600</td><td class="d">에티카 라운드베이직 에이 <b>KF94</b> 블랙&nbsp; (소형)삼방파우치_일반/전면_인</td><td class="n r">21,500</td><td class="n r">18,000</td><td class="n r">3,500</td><td class="n">1 차</td><td class="n">83.72%</td></tr>
                    <tr class="sub"><td></td><td class="n">소계</td><td></td><td></td><td class="n r">21,500</td><td class="n r">18,000</td><td class="n r">3,500</td><td></td><td class="n">83.72%</td></tr>
                    <tr><td class="n">1111281400</td><td class="n">W21823A008</td><td class="n">11EA11281400</td><td class="d">에티카 라운드베이직 에이 <b>KF94</b> 블랙&nbsp; (대형) 자동롤_일반/전면_인쇄</td><td class="n r">33,700</td><td class="n r">33,000</td><td class="n r">700</td><td class="n">1 차</td><td class="n">97.92%</td></tr>
                    <tr class="sub"><td></td><td class="n">소계</td><td></td><td></td><td class="n r">33,700</td><td class="n r">33,000</td><td class="n r">700</td><td></td><td class="n">97.92%</td></tr>
                  </tbody>
                </table>
              </div>
              <div class="gvs"><span class="gb"><svg class="tri"><use href="#tri-up"/></svg></span><span class="gth th1"></span><span class="gfl"></span><span class="gb"><svg class="tri"><use href="#tri-dn"/></svg></span></div>
            </div>
            <div class="ghs"><span class="gb"><svg class="tri"><use href="#tri-l"/></svg></span><span class="gth h1"></span><span class="gfl"></span><span class="gb"><svg class="tri"><use href="#tri-r"/></svg></span><span class="gcor"></span></div>
          </div>
        </section>

        <section class="panel p2">
          <h2>투입 정보</h2>
          <div class="gridbox">
            <div class="gridtop">
              <div class="gv">
                <table class="tbl tbl2">
                  <colgroup><col class="k1"><col class="k2"><col class="k3"><col class="k4"><col class="k10"><col class="k11"><col class="k12"></colgroup>
                  <thead><tr><th>Sap Code</th><th>작업지시 번호</th><th>자재/제품 코드</th><th>자재/제품 설명</th><th>자재 코드</th><th>투입 자재 명</th><th class="clipth">투입</th></tr></thead>
                  <tbody>
                    <tr><td class="n">1111281600</td><td class="n">W21823A007</td><td class="n">11EA11281600</td><td class="d">에티카 라운드베이직 에이 <b>KF94</b> 블랙&nbsp; (소형)삼방파우치_일반/전면_인</td><td class="n red">6110412964</td><td class="n red la">PET 16㎛ × 930㎜</td><td></td></tr>
                    <tr><td class="n">1111281600</td><td class="n">W21823A007</td><td class="n">11EA11281600</td><td class="d">에티카 라운드베이직 에이 <b>KF94</b> 블랙&nbsp; (소형)삼방파우치_일반/전면_인</td><td class="n">6110613981</td><td class="n la">PET(양면) 16㎛ × 870㎜</td><td></td></tr>
                    <tr><td class="n">1111281600</td><td class="n">W21823A007</td><td class="n">11EA11281600</td><td class="d">에티카 라운드베이직 에이 <b>KF94</b> 블랙&nbsp; (소형)삼방파우치_일반/전면_인</td><td class="n red">6110210053</td><td class="n red la">PET 12㎛ × 920㎜_양</td><td></td></tr>
                    <tr class="sub"><td></td><td class="n">소계</td><td></td><td></td><td></td><td></td><td></td></tr>
                  </tbody>
                </table>
              </div>
              <div class="gvs"><span class="gb"><svg class="tri"><use href="#tri-up"/></svg></span><span class="gth th2"></span><span class="gfl"></span><span class="gb"><svg class="tri"><use href="#tri-dn"/></svg></span></div>
            </div>
            <div class="ghs"><span class="gb"><svg class="tri"><use href="#tri-l"/></svg></span><span class="gth h2"></span><span class="gfl"></span><span class="gb"><svg class="tri"><use href="#tri-r"/></svg></span><span class="gcor"></span></div>
          </div>
        </section>

        <div class="actions">
          <button class="ab a-print">프린트 옵션</button>
          <div class="act-r">
            <button class="ab">발행</button>
            <button class="ab a-exp"><svg class="exp-i"><use href="#t-xl"/></svg><b>Export<br>Excel</b></button>
            <button class="ab a-2">특이사항<br>등록</button>
            <button class="ab">비가동 정보</button>
            <button class="ab a-last">조회</button>
          </div>
        </div>
      </div>
      <footer class="mes-f"><svg class="f-info"><use href="#info"/></svg><span>엑셀파일 출력이 완료되었습니다.</span><svg class="f-bell"><use href="#bell"/></svg></footer>
    </div>
  </div>
  <footer class="taskbar tb-r">
    <span class="ti"><svg class="ti-i s20"><use href="#t-win"/></svg></span>
    <span class="ti"><svg class="ti-i"><use href="#t-search"/></svg></span>
    <span class="ti"><svg class="ti-i"><use href="#t-calc"/></svg></span>
    <span class="ti"><svg class="ti-i"><use href="#t-one"/></svg></span>
    <span class="ti"><svg class="ti-i"><use href="#t-exp"/></svg></span>
    <span class="ti"><svg class="ti-i"><use href="#t-ie"/></svg></span>
    <span class="ti"><svg class="ti-i"><use href="#t-chrome"/></svg></span>
    <span class="ti run"><svg class="ti-i"><use href="#t-ui"/></svg></span>
    <span class="ti run"><svg class="ti-i"><use href="#t-green"/></svg></span>
    <span class="ti run"><svg class="ti-i"><use href="#t-out"/></svg></span>
    <span class="ti run"><svg class="ti-i"><use href="#t-talk"/></svg></span>
    <span class="ti"><svg class="ti-i"><use href="#t-note"/></svg></span>
    <span class="ti"><svg class="ti-i"><use href="#t-sticky"/></svg></span>
    <span class="ti run"><svg class="ti-i"><use href="#t-ui2"/></svg></span>
    <span class="ti run act"><svg class="ti-i"><use href="#t-xl"/></svg></span>
    <div class="tray tray-r">
      <span class="sys">^</span><span class="sys">▣</span><span class="sys">♢</span><span class="sys-a">A</span>
      <div class="clock"><span>오후 2:47</span><span>2021-08-25</span></div>
      <span class="notif"><svg class="n-ic"><use href="#t-note2"/></svg></span>
    </div>
  </footer>
</section>
</main>
</body>
</html>
```

FILE: styles.css
```css
*{box-sizing:border-box}
html,body{margin:0;padding:0;width:3840px;height:1080px;overflow:hidden}
body{font-family:"Noto Sans CJK KR","Noto Sans",sans-serif;font-size:14px;line-height:1.2;color:#222}
.defs{position:absolute;width:0;height:0}
svg{display:block;flex:none}
.screen{display:flex;width:3840px;height:1080px}
.monitor{width:1920px;height:1080px;display:flex;flex-direction:column;background:linear-gradient(98deg,#00b2f7 0%,#00aef5 30%,#0092e6 50%,#0468cf 72%,#0a40ae 92%,#0a3dab 100%)}
.desk{flex:1;position:relative;overflow:hidden}

/* desktop icons */
.icons{display:grid;grid-template-rows:repeat(10,103px);grid-auto-flow:column;grid-auto-columns:73px;width:300px}
.di{display:flex;flex-direction:column;align-items:center;color:#fff;font-size:13px;text-align:center;text-shadow:0 1px 2px rgba(0,0,0,.9);padding-top:13px;white-space:nowrap;height:103px;line-height:15px}
.di span{margin-top:4px;height:30px}
.g{width:42px;height:46px}
.g-talk{width:53px;height:52px;margin-top:-6px}
.g-priv{width:54px;height:50px;margin-top:-6px}

/* excel windows */
.win{position:absolute;background:#fff}
.win-back{left:260px;top:0;width:1501px;height:1040px;border-top:2px solid #888;background:#e7e9ee;display:flex;flex-direction:column}
.win-mid{left:131px;top:41px;width:700px;height:999px;border-top:1px solid #207245;overflow:hidden;background:#fff;box-shadow:0 0 4px rgba(0,0,0,.2)}
.win-front{left:157px;top:41px;width:1499px;height:999px;border:1px solid #207245;border-bottom:0;background:#fff;display:flex;flex-direction:column;box-shadow:-1px 0 6px rgba(0,60,20,.35)}

.tbar{height:27px;display:flex;align-items:center;position:relative;background:#fff;flex:none}
.qat{display:flex;align-items:center;padding-left:3px;width:283px;flex:none}
.qat-back{padding-left:4px}
.q{width:29px;height:24px;padding:0 4px;flex:none}
.q.gray,.gray{color:#999}
.q.purple{color:#7d3c98}
.q.dark,.dark{color:#444}
.qc{width:8px;height:6px;flex:none}
.wtitle{margin-left:392px;font-size:15px;color:#555;white-space:nowrap}
.back-t{margin-left:453px;color:#aaa;position:relative}
.win-back .qat{width:283px}
.win-front .qat{width:283px}
.blobs{position:absolute;top:0;height:52px}
.blobs-f{left:1016px;width:430px}
.blobs-b{left:830px;width:560px;height:38px}
.wctl{position:absolute;right:7px;top:0;height:27px;display:flex;color:#555;font-size:16px;font-weight:700}
.wctl span{width:29.500px;text-align:center;line-height:27px}
.wctl .c-box{font-weight:400;font-size:14px}
.wctl.faint{right:8px;top:0;color:#bbb}

.tabs{height:25px;display:flex;align-items:center;border-bottom:1px solid #cfcfcf;font-size:13px;color:#444;flex:none;background:transparent;position:relative}
.tab-file{width:59px;height:25px;background:#217346;color:#fff;text-align:center;line-height:25px;margin-right:4px}
.tab-home{width:38px;height:25px;border:1px solid #d4d4d4;border-bottom:1px solid #fff;color:#217346;text-align:center;line-height:24px}
.tb{text-align:center;white-space:nowrap}
.w1{width:56px}.w2{width:112px}.w3{width:60px}.w4{width:58px}.w5{width:46px}.w6{width:86px}.w7{width:78px}.w8{width:82px}
.push{margin-left:auto}
.tabs .qc.push{margin-right:5px}
.ava{width:24px;height:24px;margin-right:9px}
.tabs-back{height:24px;background:#fff;overflow:hidden;align-items:flex-start}
.tabs-back .tab-file,.tabs-back .tab-home{height:24px}
.win-back .ava{margin-right:10px}
.back-rib{height:94px;background:#fff;border-bottom:1px solid #d4d4d4;position:relative;flex:none}
.back-fx{height:71px;background:#fff;flex:none;position:relative;border:1px solid #bbb;border-width:11px 5px 11px 0;border-color:#fff;outline:0}
.back-fx::after{content:"";position:absolute;inset:0;border:1px solid #bbb;border-left:0}
.upc{position:absolute;right:8px;top:-2px;font-size:18px;color:#777;z-index:1}
.back-status{margin-top:auto;height:23px;background:#217346;color:#cfe3d6;display:flex;align-items:center;justify-content:flex-end;font-size:15px;padding-right:12px;gap:8px}
.back-status b{color:#0f4a27;font-size:18px;font-weight:700}
.zoomline{width:22px;height:1px;background:#fff;margin-right:-8px}

.mid-top{height:27px;display:flex;align-items:center;padding-left:3px}
.mid-file{height:25px;background:#217346;color:#fff;font-size:13px;padding-left:12px;line-height:25px;border-bottom:0}
.mid-rib{height:94px;border-bottom:2px solid #d4d4d4;color:#888;font-size:13px;padding:39px 0 0 7px}
.mid-fx{height:71px;padding:11px 0 0 6px;font-size:16px;color:#333;line-height:26px}
.mid-corner{height:0}
.mid-rows{list-style:none;margin:23px 0 0;padding:0;width:26px}
.mid-rows li{height:22px;line-height:22px;font-size:13px;color:#666;text-align:right;padding-right:2px;border-bottom:1px solid #d8d8d8}

/* ribbon */
.ribbon{height:94px;border-bottom:2px solid #d4d4d4;display:flex;position:relative;flex:none;background:#fff}
.grp{display:flex;flex-direction:column;height:92px;padding-top:0;flex:none;position:relative}
.grp::after{content:"";position:absolute;right:0;top:4px;bottom:4px;width:1px;background:#d4d4d4}
.grp-body{height:72px;display:flex}
.grp-label{height:20px;display:flex;align-items:center;justify-content:center;font-size:13px;color:#666;position:relative}
.lau{position:absolute;right:4px;top:6px;width:10px;height:10px}
.g-clip{width:143px}.g-font{width:249px}.g-align{width:295px}.g-num{width:140px}.g-style{width:144px}.g-cell{width:134px}.g-edit{width:193px}
.clip{padding:6px 0 0 6px}
.b-paste{width:56px;display:flex;flex-direction:column;align-items:center;font-size:13px;color:#888;white-space:nowrap}
.i-paste{width:34px;height:36px;margin-bottom:3px}
.b-paste .qc{margin-top:5px}
.clip-list{display:flex;flex-direction:column;font-size:13px;color:#555;padding-left:1px}
.clip-list>div{height:22px;display:flex;align-items:center;white-space:nowrap;gap:3px}
.i16{width:17px;height:20px}
.m-l{margin-left:8px}
.rows{flex-direction:column;padding:11px 0 0 4px;gap:8px}
.rr{display:flex;align-items:center;height:23px;gap:0;font-size:13px;color:#444}
.combo{height:23px;border:1px solid #c6c6c6;display:flex;align-items:center;padding:0 5px 0 3px;font-size:14px;color:#333;white-space:nowrap}
.c-font{width:157px}
.c-size{width:40px}
.c-num{width:130px}
.rows-n{padding-left:5px}
.ga{width:21px;text-align:center;font-size:14px;color:#555;position:relative}
.ga sup{font-size:6px;color:#2b7cd3;position:absolute;top:-2px;right:2px}
.gap-g{margin-left:2px}
.btn{width:22px;height:23px;display:flex;align-items:center;justify-content:center;flex:none;font-size:13px}
.btn .i20{width:20px;height:20px}
.btn.on{background:#a0d8b8}
.bb{font-weight:700}
.ii{font-style:italic;margin-left:0}
.uu{text-decoration:underline;margin-left:1px}
.sep{width:1px;height:22px;background:#d4d4d4;margin:0 7px;flex:none}
.i20{width:20px;height:23px;flex:none}
.tiny{font-size:9px;width:22px;text-align:center;line-height:10px;color:#444}
.w-or{width:36px;gap:1px}
.w-ind{width:44px}
.txt-btn{display:flex;align-items:center;gap:3px;white-space:nowrap;font-size:13px;height:23px;padding:0 2px}
.txt-btn .i20{height:23px}
.merge{background:#a0d8b8;width:158px;margin-left:-2px;padding:0 6px 0 2px;gap:3px}
.merge .qc{margin-left:auto}
.rr-n{gap:3px;padding-left:0}
.pc{font-size:15px;width:20px;text-align:center;color:#444}
.comma{font-weight:700;width:14px}
.rr-n .sep{margin:0 3px}
.bigs{padding:4px 0 0 4px}
.big{flex:1;display:flex;flex-direction:column;align-items:center;font-size:13px;color:#444;white-space:nowrap;line-height:16px;text-align:center}
.big span{display:flex;align-items:center;gap:2px;height:16px}
.i-big{width:30px;height:30px;margin:1px 0 5px}
.big>.qc{margin-top:6px}
.g-cell .bigs{padding:3px 12px 0}
.edit{padding:2px 0 0 3px}
.edit-list{width:99px;flex:none}
.edit-list .i16{margin-right:2px}
.rib-up{position:absolute;right:8px;top:76px;color:#666;font-size:16px;line-height:16px}

/* formula */
.fxbar{height:71px;display:flex;padding:11px 5px 11px 5px;flex:none;background:#fff}
.namebox{width:101px;height:28px;border:1px solid #c6c6c6;display:flex;align-items:center;padding:0 6px;font-size:16px;color:#333}
.dots{width:32px;text-align:center;color:#999;font-size:18px;line-height:28px}
.fxbtns{width:108px;height:28px;border:1px solid #c6c6c6;display:flex;align-items:center;justify-content:space-around;color:#bbb;font-size:20px}
.fx-f{font-family:"Liberation Serif",serif;font-style:italic;color:#555;font-size:24px;line-height:26px}
.fxinput{flex:1;margin-left:3px;border:1px solid #c6c6c6;font-size:15px;color:#333;padding:1px 12px;position:relative}
.fx-up{position:absolute;right:2px;top:10px;font-size:18px;color:#666;font-weight:700}

/* sheet */
.sheet-wrap{height:771px;display:flex;overflow:hidden;flex:none}
.sheet{width:1478px;flex:none;background:#fff}
.colhead{height:28px;display:flex;border-bottom:2px solid #aaa}
.corner{width:37px;height:26px;border-right:1px solid #d4d4d4;position:relative;background:linear-gradient(135deg,#fff 50%,#d8d8d8 50%);background-size:22px 20px;background-position:right 2px bottom 2px;background-repeat:no-repeat}
.heads{display:grid;grid-template-columns:repeat(26,55px);flex:none}
.heads span{text-align:center;font-size:17px;color:#444;line-height:26px;border-right:1px solid #d4d4d4;height:26px}
.xrow{height:30px;display:flex;flex:none}
.rh{width:37px;flex:none;font-size:18px;color:#555;text-align:center;line-height:30px;border-right:1px solid #aaa;border-bottom:1px solid #d4d4d4}
.rh.act{background:#e2e2e2;color:#217346;font-weight:700;border-right:2px solid #217346}
.cells{display:grid;grid-template-columns:repeat(26,55px) 11px;grid-auto-rows:100%;width:1441px;flex:none;height:30px;border-bottom:2px solid #d4d4d4;background:repeating-linear-gradient(to right,transparent 0 54px,#d4d4d4 54px 55px)}
.cells.nob{border-bottom:0}
.cells.hb{border-bottom:2px solid #666}
.cells.dbl{border-bottom:3px double #666}
.c{background:#fff;overflow:hidden;white-space:nowrap;display:flex;align-items:center;padding:0 4px;font-size:18px;color:#111;min-width:0;border-right:1px solid #d4d4d4}
.t .c{border-right:1px solid #777}
.pn{word-spacing:2px}
.s1{grid-column:span 1}.s2{grid-column:span 2}.s3{grid-column:span 3}.s8{grid-column:span 8}.s9{grid-column:span 9}.s26{grid-column:span 26}
.sl{background:#fbbf7f !important;border-right:0 !important}
.b{font-weight:700}
.info{font-size:19px}
.r{justify-content:flex-end}
.m{justify-content:center}
.y .c{background:#ffff00}
.o .c{background:#fbbf7f}
.sect{overflow:visible;font-size:25px;font-weight:700;background:transparent;border-right:0}
.sect span{position:relative;top:15px;background:#fff}
.s26{background:#fff}
.cells.nob .s26{height:30px}
.vs{width:19px;margin-left:2px;padding-top:2px;display:flex;flex-direction:column;background:#f0f0f0;border-left:1px solid #ddd}
.vs-b{height:14px;flex:none;display:flex;align-items:center;justify-content:center;background:#fff;border:1px solid #c6c6c6}
.tri{width:10px;height:10px}
.vs-t{height:370px;background:#fff;border:1px solid #c6c6c6;flex:none}
.vs-f{flex:1}
.sheetbar{height:11px;overflow:hidden;display:flex;background:#f0f0f0;font-size:12px;color:#217346;border-top:1px solid #c6c6c6}
.sh-tab{margin-left:100px;width:66px;text-align:center;background:#fff;line-height:16px;border:1px solid #c6c6c6;border-top:0;padding-top:6px;font-weight:700}
.sh-plus{margin-left:32px;color:#888;line-height:14px}
.sh-thumb{margin-left:530px;width:142px;background:#fff;border:1px solid #c6c6c6}

/* taskbar */
.taskbar{height:40px;flex:none;display:flex;align-items:center;background:#27393d;color:#fff}
.tb-l{background:linear-gradient(90deg,#26393e,#2f3d34)}
.tb-r{background:#25373f}
.ti{width:49px;height:40px;display:flex;align-items:center;justify-content:center;position:relative;flex:none}
.ti-i{width:24px;height:24px}
.s20{width:20px;height:20px}
.run::after{content:"";position:absolute;left:5px;right:5px;bottom:0;height:2px;background:#76b9ed}
.ti.act{background:rgba(255,255,255,.16)}
.ti.act::after{left:0;right:0}
.tray{margin-left:auto;display:flex;align-items:center;width:580px;height:40px;font-size:13px;color:#ddd;flex:none}
.tray-r{width:180px;color:#eee}
.tool1{width:70px;white-space:nowrap;color:#bbb}
.tchev{width:12px;margin-top:-18px;text-align:center}
.tool2{width:109px;margin-left:9px;color:#bbb}
.w-ic{width:24px;height:26px}
.w-tx{margin-left:9px;width:90px;font-size:14px;white-space:nowrap}
.sys{width:24px;text-align:center;font-size:14px}
.w-tx+.sys{margin-left:6px}
.sys-a{width:20px;text-align:center;font-size:17px}
.clock{width:82px;display:flex;flex-direction:column;align-items:center;font-size:13px;line-height:18px;white-space:nowrap}
.notif{width:42px;display:flex;justify-content:center;position:relative}
.tray-r .notif{width:24px}
.n-ic{width:20px;height:30px}
.notif b{position:absolute;left:17px;top:12px;font-size:12px;color:#fff}
.showd{width:11px;height:40px;border-left:1px solid #556}

/* MES */
.mes{position:absolute;left:320px;top:120px;width:1280px;height:800px;display:flex;flex-direction:column;background:#2e4068}
.mes-h{height:47px;flex:none;background:#2e4068;border-bottom:4px solid #0f84de;display:flex;align-items:center;color:#fff;padding-left:15px;position:relative}
.burger{width:26px;height:22px;display:flex;flex-direction:column;justify-content:space-between;margin-top:-2px}
.burger i{height:4px;background:#fff;display:block}
.logo{font-family:"Open Sans","Liberation Sans",sans-serif;font-weight:600;font-size:34px;margin-left:15px;letter-spacing:-1px;line-height:43px;margin-top:-5px}
.logo-sub{font-family:"Lato","Liberation Sans",sans-serif;font-weight:700;font-size:17.500px;margin-left:8px;margin-top:4px;white-space:nowrap}
.who{margin-left:auto;display:flex;flex-direction:column;align-items:flex-end;line-height:20px;margin-top:-4px}
.site{font-size:13px;color:#c9d0e0}
.usr{font-size:15px}
.h-blue{width:95px;height:40px;background:#0f84de;margin:3px 0 0 11px;display:flex;align-items:center;align-self:flex-start;margin-top:3px;flex:none}
.h-gear{width:28px;height:28px;margin-left:11px}
.h-out{width:24px;height:30px;margin-left:12px}
.h-ctl{display:flex;align-items:center;flex:none;width:133px;height:43px;color:#fff}
.h-min{width:20px;height:3px;background:#fff;margin-left:15px}
.h-exp{width:28px;height:28px;margin-left:16px}
.h-x{width:24px;height:24px;margin-left:25px}
.mes-b{flex:1;background:#e4e6eb;margin:0 3px;padding:0 20px;position:relative;display:flex;flex-direction:column;min-height:0}
.side{position:absolute;left:0;top:13px;width:20px;height:30px;background:#0f84de;display:flex;align-items:center;justify-content:center}
.side-i{width:9px;height:12px}
.page-t{height:41px;display:flex;align-items:flex-end;justify-content:space-between;flex:none;margin-right:-8px}
h1{margin:0 0 0 7px;font-size:28px;line-height:36px;font-weight:700;color:#111}
.close{width:100px;height:18px;background:#707070;color:#fff;text-align:center;font-size:15px;line-height:18px;margin-bottom:2px}
.form{height:129px;background:#fff;flex:none;display:flex;padding-top:5px}
.fcol{width:635px;padding-left:15px;flex:none}
.frow{height:42px;display:flex;align-items:flex-start;font-size:17px}
.fl{width:136px;font-size:16.500px;color:#444;flex:none;line-height:34px;white-space:nowrap;padding-top:2px}
.fl em{color:#f03;font-style:normal;margin-left:6px}
.date{width:150px;height:27px;margin-top:3px;border:1px solid #999;display:flex;align-items:center;padding:0 5px;font-size:15px;font-weight:700;color:#111;flex:none}
.qc2{width:8px;height:6px}
.tilde{width:21px;text-align:center;line-height:32px;color:#555}
.look{width:199px;height:29px;border:1px solid #999;display:flex;align-items:center;flex:none;font-size:15px;font-weight:700;color:#111}
.fcol-r .fl{width:137px}
.fcol-r .look{width:200px}
.fcol .frow:nth-child(1) .look{margin-top:3px}
.fcol-r .frow:nth-child(1) .look{margin-top:0}
.fcol-r .frow:nth-child(1) .val{height:34px}
.lv{flex:1;padding-left:5px}
.lx{font-size:13px;margin-right:6px;font-weight:700;color:#333}
.lb{width:30px;height:27px;background:#0f84de;display:flex;align-items:center;justify-content:center;border-left:1px solid #999;flex:none}
.lb-i{width:22px;height:26px}
.val{margin-left:11px;width:139px;height:34px;border-bottom:2px solid #ddd;font-size:16px;color:#111;line-height:28px;padding-left:3px;white-space:nowrap;flex:none}
.fcol-r .val{margin-left:10px}
.fl2{line-height:21px;padding-top:0;margin-top:-3px;white-space:normal}
.chk{width:22px;height:21px;border:2px solid #999;background:#fff;margin-top:7px}
.panel{background:#fff;margin-top:14px;padding:0 11px;flex:none}
.p1{height:241px}
.p2{height:225px;margin-top:10px}
h2{margin:0 0 0 -3px;height:37px;font-size:20px;line-height:30px;font-weight:500;color:#333}
.gridbox{border:2px solid #b4b4b4;display:flex;flex-direction:column;overflow:hidden;background:#e4e4e4}
.p1 .gridbox{height:198px}
.p2 .gridbox{height:182px}
.gridtop{flex:1;display:flex;min-height:0}
.gv{width:1193px;flex:none;overflow:hidden;background:#fff}
.tbl{border-collapse:collapse;table-layout:fixed;width:1193px;font-size:15.500px}
.k1{width:105px}.k2{width:116px}.k3{width:125.500px}.k4{width:527.500px}.k5{width:80px}.k6{width:62px}.k7{width:80px}.k8{width:43px}.k9{width:54px}.k10{width:106px}.k11{width:192px}.k12{width:21px}
.tbl th{background:#2e4068;color:#fff;font-weight:400;height:29px;border-left:1px solid #b4b4b4;border-right:1px solid #b4b4b4;font-size:16px;white-space:nowrap;overflow:hidden;padding:0;line-height:20px}
.tbl th:first-child{border-left:0}
.tbl td{height:39px;border:1px solid #b8b8b8;white-space:nowrap;overflow:hidden;padding:0 3px;text-align:center;color:#111}
.tbl td:first-child{border-left:0}
.tbl td.d{text-align:left;padding-left:5px;font-size:17px;word-spacing:3px;color:#222}
.tbl td.n{font-weight:700}
.tbl td.r{text-align:right}
.tbl td.la{text-align:left;padding-left:5px}
.tbl td.red{color:#f55}
.sub td{background:#e9e9e9}
.clipth{text-align:left;padding-left:7px !important}
.gvs{width:18px;flex:none;display:flex;flex-direction:column;background:#e4e4e4;border-left:1px solid #b4b4b4}
.gb{height:15px;width:17px;background:#f2f2f2;display:flex;align-items:center;justify-content:center;flex:none}
.gth{background:#969696;flex:none}
.th1{height:61px;margin-top:1px}
.th2{height:34px;margin-top:1px}
.gfl{flex:1}
.ghs{height:16px;display:flex;flex:none;background:#e4e4e4;border-top:1px solid #b4b4b4}
.ghs .gb{height:15px}
.h1{width:1100px;margin-left:1px}
.h2{width:1088px;margin-left:1px}
.gcor{width:19px;background:#eee;border-left:1px solid #b4b4b4;flex:none}
.actions{display:flex;justify-content:space-between;margin-top:10px;height:40px;flex:none}
.ab{background:#0f84de;color:#fff;border:0;font:inherit;font-size:16px;line-height:20px;width:110px;height:40px;padding:0;display:flex;align-items:center;justify-content:center;text-align:center}
.a-print{width:115px;font-size:16px}
.act-r{display:flex;gap:10px}
.a-last{width:112px}
.a-exp{justify-content:flex-start;gap:9px;padding-left:7px;text-align:left}
.a-exp b{font-weight:700;font-size:16px}
.exp-i{width:26px;height:26px}
.mes-f{height:38px;flex:none;display:flex;align-items:center;color:#fff;padding:0 19px 0 18px;font-size:18.500px}
.f-info{width:25px;height:25px;margin-right:14px}
.f-bell{margin-left:auto;width:24px;height:28px}
```
